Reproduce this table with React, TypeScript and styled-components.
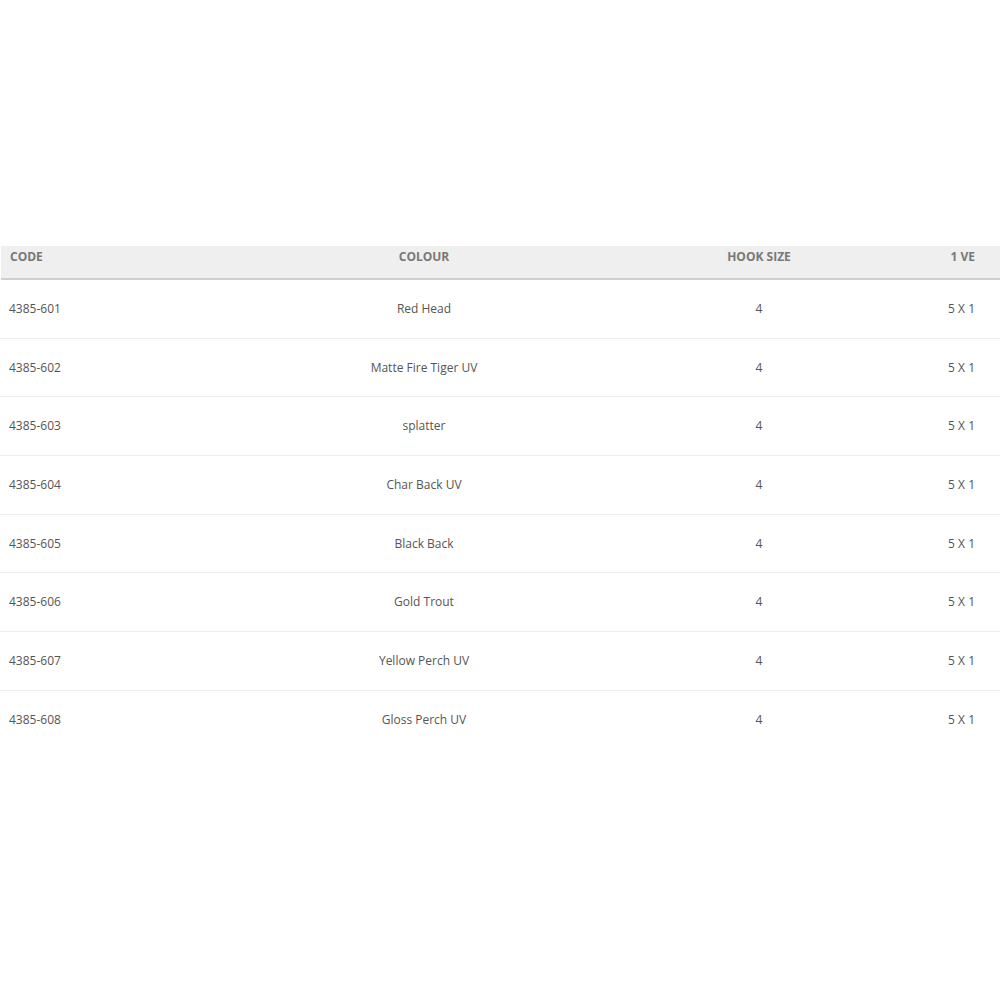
import React from "react";
import styled, { createGlobalStyle } from "styled-components";

const Global = createGlobalStyle`
  html, body { margin: 0; padding: 0; background: #ffffff; }
  body { font-family: "Open Sans", "Liberation Sans", sans-serif; }
`;

const Page = styled.div`
  width: 1000px;
  padding-top: 246px;
`;

const Table = styled.div`
  display: grid;
  grid-template-columns: 180px 488px 182px 150px;
  width: 1000px;
`;

const HeadCell = styled.div<{ $align: "left" | "center" | "right" }>`
  height: 34px;
  box-sizing: border-box;
  padding: 3px ${(p) => (p.$align === "right" ? "25px" : "0")} 0 ${(p) => (p.$align === "left" ? "9px" : "0")};
  background: #efefef;
  border-bottom: 2px solid #cfcfcf;
  color: #787878;
  font-size: 12px;
  font-weight: 700;
  line-height: 16px;
  text-transform: uppercase;
  text-align: ${(p) => p.$align};
  &:first-child { margin-left: 1px; }
`;

const Cell = styled.div<{ $align: "left" | "center" | "right"; $last?: boolean }>`
  height: 58.7px;
  box-sizing: border-box;
  display: flex;
  align-items: center;
  justify-content: ${(p) =>
    p.$align === "left" ? "flex-start" : p.$align === "right" ? "flex-end" : "center"};
  padding: 0 ${(p) => (p.$align === "right" ? "25px" : "0")} 0 ${(p) => (p.$align === "left" ? "9px" : "0")};
  border-bottom: ${(p) => (p.$last ? "none" : "1px solid #ececec")};
  color: #555555;
  font-size: 12px;
  line-height: 16px;
`;

const rows = [
  ["4385-601", "Red Head"],
  ["4385-602", "Matte Fire Tiger UV"],
  ["4385-603", "splatter"],
  ["4385-604", "Char Back UV"],
  ["4385-605", "Black Back"],
  ["4385-606", "Gold Trout"],
  ["4385-607", "Yellow Perch UV"],
  ["4385-608", "Gloss Perch UV"],
];

export default function App() {
  return (
    <Page>
      <Global />
      <Table>
        <HeadCell $align="left">Code</HeadCell>
        <HeadCell $align="center">Colour</HeadCell>
        <HeadCell $align="center">Hook Size</HeadCell>
        <HeadCell $align="right">1 VE</HeadCell>
        {rows.map(([code, colour], i) => {
          const last = i === rows.length - 1;
          return (
            <React.Fragment key={code}>
              <Cell $align="left" $last={last}>{code}</Cell>
              <Cell $align="center" $last={last}>{colour}</Cell>
              <Cell $align="center" $last={last}>4</Cell>
              <Cell $align="right" $last={last}>5 X 1</Cell>
            </React.Fragment>
          );
        })}
      </Table>
    </Page>
  );
}
